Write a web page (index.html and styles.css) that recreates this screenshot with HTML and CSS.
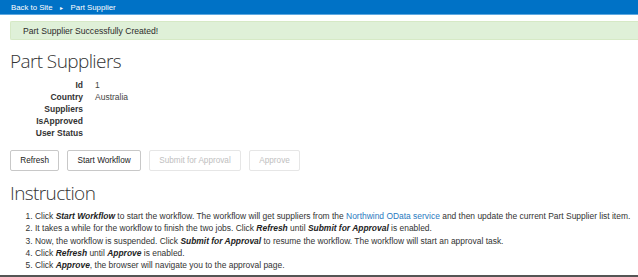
FILE: index.html
```html
<!DOCTYPE html>
<html>
<head>
<meta charset="utf-8">
<link rel="stylesheet" href="styles.css">
</head>
<body>
<nav class="topnav">
  <a class="navlink" href="#">Back to Site</a>
  <span class="sep">&#9656;</span>
  <span class="navlink">Part Supplier</span>
</nav>
<div class="alert">Part Supplier Successfully Created!</div>
<main class="content">
  <h1 class="title">Part Suppliers</h1>
  <dl class="props">
    <dt>Id</dt><dd>1</dd>
    <dt>Country</dt><dd>Australia</dd>
    <dt>Suppliers</dt><dd></dd>
    <dt>IsApproved</dt><dd></dd>
    <dt>User Status</dt><dd></dd>
  </dl>
  <div class="buttons">
    <button class="btn">Refresh</button>
    <button class="btn">Start Workflow</button>
    <button class="btn" disabled>Submit for Approval</button>
    <button class="btn" disabled>Approve</button>
  </div>
  <h2 class="title">Instruction</h2>
  <ol class="steps">
    <li>Click <b>Start Workflow</b> to start the workflow. The workflow will get suppliers from the <a href="#">Northwind OData service</a> and then update the current Part Supplier list item.</li>
    <li>It takes a while for the workflow to finish the two jobs. Click <b>Refresh</b> until <b>Submit for Approval</b> is enabled.</li>
    <li>Now, the workflow is suspended. Click <b>Submit for Approval</b> to resume the workflow. The workflow will start an approval task.</li>
    <li>Click <b>Refresh</b> until <b>Approve</b> is enabled.</li>
    <li>Click <b>Approve</b>, the browser will navigate you to the approval page.</li>
  </ol>
</main>
<div class="bottomline"></div>
</body>
</html>
```
FILE: styles.css
```css
html, body {
  margin: 0;
  padding: 0;
  background: #fff;
  width: 638px;
  height: 277px;
  overflow: hidden;
  font-family: "Liberation Sans", Arial, sans-serif;
  color: #333;
}
body {
  display: flex;
  flex-direction: column;
}
.topnav {
  height: 14px;
  flex: none;
  background: #0072c6;
  border-bottom: 1px solid #5fa8e0;
  display: flex;
  align-items: center;
  padding-left: 11px;
  font-family: "Liberation Sans", Arial, sans-serif;
  font-size: 7.8px;
  color: #fff;
}
.navlink {
  color: #fff;
  text-decoration: none;
}
.sep {
  font-size: 6px;
  margin: 0 8px 0 7px;
}
.alert {
  flex: none;
  margin: 6px 0 0 10px;
  height: 17px;
  background: #dff0d8;
  border: 1px solid #d6e9c6;
  border-right: none;
  border-radius: 2px 0 0 2px;
  display: flex;
  align-items: center;
  padding-left: 12px;
  font-size: 8.6px;
  color: #2b2b2b;
}
.content {
  padding-left: 10px;
  flex: 1;
}
.title {
  font-family: "Open Sans", sans-serif;
  font-weight: 300;
  font-size: 19px;
  letter-spacing: -0.6px;
  color: #333;
  margin: 0;
  line-height: 24px;
}
h1.title {
  margin-top: 9px;
}
.props {
  display: grid;
  grid-template-columns: 73px auto;
  column-gap: 12px;
  margin: 6px 0 0 0;
  font-size: 8.5px;
  line-height: 12px;
}
.props dt {
  text-align: right;
  font-weight: bold;
  color: #333;
}
.props dd {
  margin: 0;
  color: #444;
}
.buttons {
  display: flex;
  gap: 8px;
  margin-top: 11px;
}
.btn {
  font-family: "Liberation Sans", Arial, sans-serif;
  font-size: 8.2px;
  height: 21px;
  padding: 0 9.3px;
  background: #fff;
  border: 1px solid #c8c8c8;
  border-radius: 2px;
  color: #222;
}
.btn:disabled {
  border-color: #e6e6e6;
  color: #c0c0c0;
}
h2.title {
  margin-top: 10px;
}
.steps {
  margin: 5px 0 0 0;
  padding-left: 25px;
  font-size: 8.45px;
  line-height: 12.3px;
  color: #333;
}
.steps b {
  font-style: italic;
  color: #222;
}
.steps a {
  color: #2a7ac0;
  text-decoration: none;
}
.bottomline {
  height: 2px;
  background: #555;
  flex: none;
}
```
